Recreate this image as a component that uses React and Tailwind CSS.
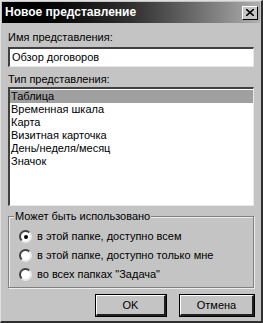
const sunken =
  "border-t-2 border-l-2 border-b border-r border-t-[#404040] border-l-[#404040] border-b-[#e8e8e8] border-r-[#e8e8e8]";

const Radio = ({ checked, label }) => (
  <div className="flex items-center gap-[5px] h-[19px]">
    <span className="w-[13px] h-[13px] rounded-full bg-white border-2 border-t-[#404040] border-l-[#404040] border-b-[#e8e8e8] border-r-[#e8e8e8] flex items-center justify-center">
      {checked && <span className="w-[4px] h-[4px] rounded-full bg-black" />}
    </span>
    <span>{label}</span>
  </div>
);

const Button = ({ children, className }) => (
  <button
    className={`h-[21px] bg-[#c4c4c4] border-t border-l border-b-2 border-r-2 border-t-white border-l-white border-b-[#202020] border-r-[#202020] outline outline-1 outline-black ${className}`}
  >
    {children}
  </button>
);

const items = [
  "Таблица",
  "Временная шкала",
  "Карта",
  "Визитная карточка",
  "День/неделя/месяц",
  "Значок",
];

export default function App() {
  return (
    <div
      className="w-[263px] h-[323px] bg-[#c4c4c4] text-black text-[11px] leading-[13px] border-t border-l border-b-2 border-r-2 border-t-[#e0e0e0] border-l-[#e0e0e0] border-b-[#303030] border-r-[#303030] flex flex-col"
      style={{ fontFamily: '"Liberation Sans", Arial, sans-serif' }}
    >
      {/* title bar */}
      <div className="h-[21px] mx-[1px] mt-[1px] flex items-center justify-between pl-[3px] pr-[2px] bg-gradient-to-r from-[#000000] via-[#303030] to-[#b0b0b0]">
        <span className="text-white font-bold text-[12px]">Новое представление</span>
        <span className="w-[16px] h-[14px] bg-[#c4c4c4] border-t border-l border-b border-r border-t-white border-l-white border-b-black border-r-black flex items-center justify-center">
          <svg width="8" height="7" viewBox="0 0 8 7">
            <path d="M0 0 L8 7 M8 0 L0 7" stroke="black" strokeWidth="1.6" />
          </svg>
        </span>
      </div>

      <div className="flex flex-col px-[7px] pt-[8px]">
        <div className="h-[13px]">Имя представления:</div>
        <div className={`mt-[3px] h-[20px] bg-white flex items-center pl-[2px] ${sunken}`}>
          Обзор договоров
        </div>

        <div className="mt-[6px] h-[13px]">Тип представления:</div>
        <div className={`mt-[1px] h-[119px] bg-white pt-[1px] ${sunken}`}>
          {items.map((item, i) => (
            <div
              key={item}
              className={`h-[13px] pl-[1px] ${i === 0 ? "bg-[#a0a0a0]" : ""}`}
            >
              {item}
            </div>
          ))}
        </div>

        {/* group box */}
        <div className="relative mt-[10px] h-[72px] border border-[#808080] shadow-[inset_1px_1px_0_#ececec,1px_1px_0_#ececec] pt-[10px] pl-[10px] flex flex-col">
          <span className="absolute -top-[7px] left-[5px] bg-[#c4c4c4] px-[1px]">
            Может быть использовано
          </span>
          <Radio checked label="в этой папке, доступно всем" />
          <Radio label="в этой папке, доступно только мне" />
          <Radio label="во всех папках &quot;Задача&quot;" />
        </div>

        <div className="flex justify-end gap-[14px] mt-[7px]">
          <Button className="w-[70px]">OK</Button>
          <Button className="w-[74px]">Отмена</Button>
        </div>
      </div>
    </div>
  );
}
